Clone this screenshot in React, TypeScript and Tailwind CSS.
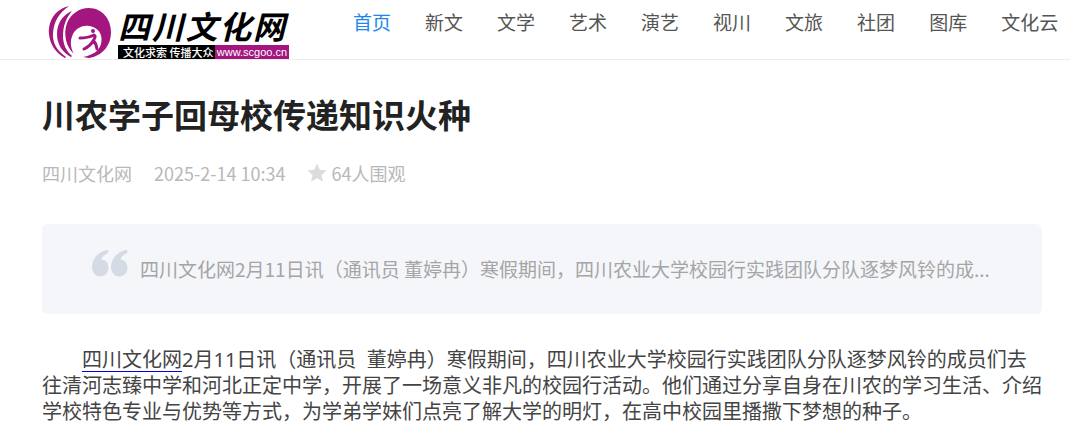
const navItems = ["首页", "新文", "文学", "艺术", "演艺", "视川", "文旅", "社团", "图库", "文化云"];

function Emblem() {
  return (
    <svg viewBox="0 0 64 54" className="h-[54px] w-16 shrink-0" fill="#a3157f" aria-hidden="true">
      <path d="M21 1C8 4 0 15 1 29c1 11 7 19 16 24l1-1C9 46 4 37 5 28 6 16 11 8 21 1Z" />
      <path d="M24 6C14 10 9 19 9 29c0 10 5 18 14 23l1-1c-6-5-9-12-9-20 0-10 3-18 9-25Z" />
      <path d="M19 18C23 9 31 3 41 3c13 0 22 11 22 24 0 14-9 24-22 26l-6-1c10-2 16-6 18-13 2-8-1-14-8-17-8-3-16 0-20 7-3 6-3 13 1 20-8-7-11-20-7-31Z" />
      <circle cx="45" cy="26" r="2" />
      <path
        d="M32 33c5 0 10-1 14-3 2 1 1 3-1 6-2 4-5 6-9 8M45 36c3 1 3 4 4 8"
        fill="none"
        stroke="#a3157f"
        strokeWidth="3"
        strokeLinecap="round"
        strokeLinejoin="round"
      />
    </svg>
  );
}

function Logo() {
  return (
    <a href="#" className="flex shrink-0 items-end gap-[6px]">
      <Emblem />
      <span className="flex w-[171px] flex-col">
        <span className="flex justify-between pr-1 text-[32px] leading-10 font-bold text-black italic">
          {[..."四川文化网"].map((char) => (
            <span key={char}>{char}</span>
          ))}
        </span>
        <span className="flex h-[14px] text-[11px] leading-[14px] whitespace-nowrap text-white">
          <span className="flex-1 bg-black pl-[5px] font-medium">文化求索 传播大众</span>
          <span className="w-[74px] bg-[#a3157f] text-center font-['Liberation_Sans']">
            www.scgoo.cn
          </span>
        </span>
      </span>
    </a>
  );
}

export default function App() {
  return (
    <div className="min-h-screen bg-white font-['Noto_Sans_CJK_SC',sans-serif]" lang="zh-CN">
      <header className="flex h-[60px] items-start border-b border-[#ececec] pl-12">
        <div className="flex h-[59px] items-end">
          <Logo />
        </div>
        <nav className="ml-16 flex gap-[34px] text-[19px] leading-[44px] whitespace-nowrap text-[#555]">
          {navItems.map((item, i) => (
            <a key={item} href="#" className={i === 0 ? "text-[#1a86f0]" : ""}>
              {item}
            </a>
          ))}
        </nav>
      </header>

      <main className="pt-[30px] pr-7 pl-[42px]">
        <h1 className="text-[33px] leading-[48px] font-bold text-[#222]">川农学子回母校传递知识火种</h1>

        <div className="mt-[21px] flex items-center text-[18px] leading-7 text-[#b8b8b8]">
          <span>四川文化网</span>
          <time className="ml-[22px]">2025-2-14 10:34</time>
          <span className="ml-[22px] flex items-center gap-1">
            <svg viewBox="0 0 20 20" className="size-5" fill="#dcdcdc" aria-hidden="true">
              <path d="M10 0.5l2.8 6.2 6.7.7-5 4.5 1.4 6.7L10 15.2l-5.9 3.4 1.4-6.7-5-4.5 6.7-.7Z" />
            </svg>
            64人围观
          </span>
        </div>

        <blockquote className="mt-[37px] flex h-[90px] items-center rounded-md bg-[#f5f6fa] px-[50px] text-[#a5a5a5]">
          <svg viewBox="0 0 36 27" className="mb-3 h-[27px] w-9 shrink-0" fill="#d5dbe5" aria-hidden="true">
            <path d="M16 0.5c1 .9.5 2.2-.8 2.9-3.300 1.600-5.200 3.600-5.700 6.100 4.200.2 7 3.500 7 8 0 5-3.500 9-8.200 9S0 22.500 0 17C0 8.500 7 1.500 14 .2c.8-.2 1.500-.1 2 .3Z" />
            <path d="M35 0.5c1 .9.5 2.2-.8 2.9-3.300 1.600-5.200 3.600-5.700 6.100 4.200.2 7 3.500 7 8 0 5-3.500 9-8.200 9S19 22.500 19 17C19 8.500 26 1.500 33 .2c.8-.2 1.500-.1 2 .3Z" />
          </svg>
          <p className="ml-3 text-[19px] leading-7 whitespace-nowrap">
            四川文化网2月11日讯（通讯员 董婷冉）寒假期间，四川农业大学校园行实践团队分队逐梦风铃的成...
          </p>
        </blockquote>

        <p className="mt-[33px] indent-10 font-['Noto_Sans','Noto_Sans_CJK_SC',sans-serif] text-[20px] leading-[26px] text-[#444]">
          <a href="#" className="underline decoration-[#0000ee] decoration-1 underline-offset-4">
            四川文化网
          </a>
          2月11日讯（通讯员&nbsp; 董婷冉）寒假期间，四川农业大学校园行实践团队分队逐梦风铃的成员们去往清河志臻中学和河北正定中学，开展了一场意义非凡的校园行活动。他们通过分享自身在川农的学习生活、介绍学校特色专业与优势等方式，为学弟学妹们点亮了解大学的明灯，在高中校园里播撒下梦想的种子。
        </p>
      </main>
    </div>
  );
}
